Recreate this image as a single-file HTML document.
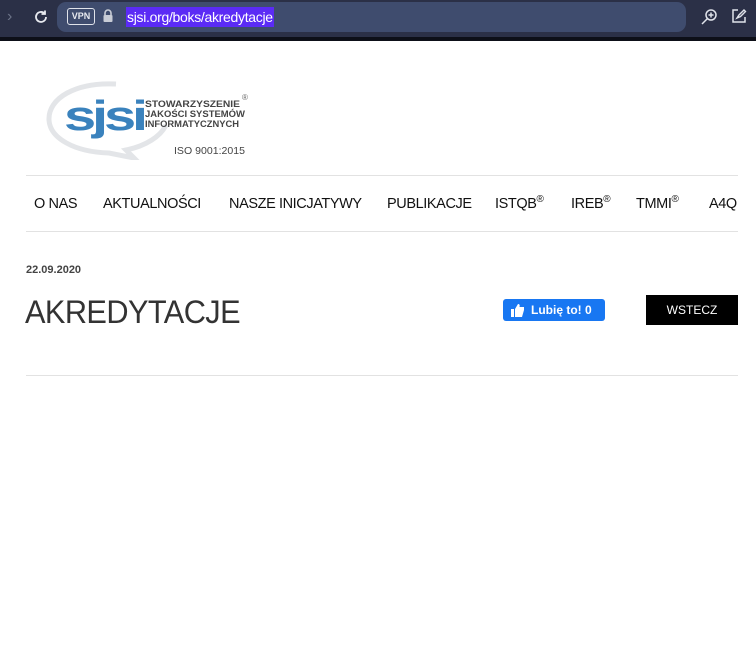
<!DOCTYPE html>
<html><head><meta charset="utf-8"><style>
*{margin:0;padding:0;box-sizing:border-box}
body{width:756px;height:671px;background:#fff;font-family:"Liberation Sans",sans-serif;position:relative;overflow:hidden}
.abs{position:absolute}
.top{left:0;top:0;width:756px;height:37px;background:#2b3047}
.blk{left:0;top:37px;width:756px;height:4px;background:#0d0f18}
.pill{left:57px;top:2px;width:629px;height:30px;background:#3f4c6e;border-radius:9px}
.vpn{left:67px;top:8px;width:28px;height:17px;border:1.5px solid #e0e3ea;border-radius:3px;color:#e8eaf0;font-size:9px;font-weight:bold;text-align:center;line-height:14px}
.url{left:126px;top:7px;height:20px;background:#5b2bf5;color:#fff;font-size:14px;line-height:20px;padding:0 1px;letter-spacing:-0.3px}
.nav{top:195px;font-size:14.5px;color:#111;line-height:18px;letter-spacing:-0.4px;white-space:nowrap}
.nav sup{font-size:10px;line-height:0;vertical-align:6px}
.hr{left:26px;width:712px;height:1px;background:#e2e2e2}
</style></head><body>
<div class="abs top"></div><div class="abs blk"></div>
<div class="abs" style="left:7px;top:8px;color:#6c7388;font-size:16px">›</div>
<svg class="abs" style="left:33px;top:9px" width="16" height="16" viewBox="0 0 16 16"><path d="M13 8a5 5 0 1 1-1.5-3.6" fill="none" stroke="#e8eaf0" stroke-width="1.8"/><path d="M12 1.5v3.5h-3.5" fill="none" stroke="#e8eaf0" stroke-width="1.8"/></svg>
<div class="abs pill"></div>
<div class="abs vpn">VPN</div>
<svg class="abs" style="left:102px;top:9px" width="12" height="14" viewBox="0 0 12 14"><path d="M3 6V4a3 3 0 0 1 6 0v2" fill="none" stroke="#c8ccd6" stroke-width="1.6"/><rect x="1.5" y="6" width="9" height="7" rx="1" fill="#c8ccd6"/></svg>
<div class="abs url">sjsi.org/boks/akredytacje</div>
<svg class="abs" style="left:700px;top:8px" width="18" height="18" viewBox="0 0 18 18"><circle cx="11" cy="7" r="5" fill="none" stroke="#e0e3ea" stroke-width="1.5"/><path d="M7.5 10.5L2 16M11 4.5v5M8.5 7h5" stroke="#e0e3ea" stroke-width="1.5"/></svg>
<svg class="abs" style="left:731px;top:8px" width="16" height="16" viewBox="0 0 16 16"><path d="M7 2H2v12h12V9" fill="none" stroke="#e0e3ea" stroke-width="1.5"/><path d="M6 10l2-3 5-5 1.5 1.5-5 5z" fill="none" stroke="#e0e3ea" stroke-width="1.4"/></svg>

<svg class="abs" style="left:46px;top:78px" width="210" height="82" viewBox="0 0 210 82">
<path d="M70 6C30 4 2 20 3 42c1 18 25 32 60 33l25 5-8-8c20-4 35-14 40-25" fill="none" stroke="#e3e5e8" stroke-width="5"/>
<text x="18" y="52" font-family="Liberation Sans" font-weight="bold" font-size="42" fill="#3a82bd" letter-spacing="-3" textLength="80" lengthAdjust="spacingAndGlyphs">sjsi</text>
<text x="99" y="29" font-family="Liberation Sans" font-weight="bold" font-size="9" fill="#444" textLength="95" lengthAdjust="spacingAndGlyphs">STOWARZYSZENIE</text>
<text x="99" y="39" font-family="Liberation Sans" font-weight="bold" font-size="9" fill="#444" textLength="100" lengthAdjust="spacingAndGlyphs">JAKOŚCI SYSTEMÓW</text>
<text x="99" y="49" font-family="Liberation Sans" font-weight="bold" font-size="9" fill="#444" textLength="94" lengthAdjust="spacingAndGlyphs">INFORMATYCZNYCH</text>
<text x="196" y="22" font-family="Liberation Sans" font-size="8" fill="#666">®</text>
<text x="128" y="76" font-family="Liberation Sans" font-size="10.5" fill="#444" textLength="71" lengthAdjust="spacingAndGlyphs">ISO 9001:2015</text>
</svg>

<div class="abs hr" style="top:175px"></div>
<div class="abs nav" style="left:34px">O NAS</div>
<div class="abs nav" style="left:103px">AKTUALNOŚCI</div>
<div class="abs nav" style="left:229px">NASZE INICJATYWY</div>
<div class="abs nav" style="left:387px">PUBLIKACJE</div>
<div class="abs nav" style="left:495px">ISTQB<sup>®</sup></div>
<div class="abs nav" style="left:571px">IREB<sup>®</sup></div>
<div class="abs nav" style="left:636px">TMMI<sup>®</sup></div>
<div class="abs nav" style="left:709px">A4Q</div>
<div class="abs hr" style="top:231px"></div>

<div class="abs" style="left:26px;top:264px;font-size:11px;color:#444;font-weight:bold">22.09.2020</div>
<div class="abs" style="left:25px;top:294px;font-size:32px;color:#333;letter-spacing:-0.6px;transform:scaleX(0.96);transform-origin:left">AKREDYTACJE</div>
<div class="abs" style="left:503px;top:299px;width:102px;height:22px;background:#1877f2;border-radius:3px;color:#fff;font-size:12px;font-weight:bold;line-height:22px;padding-left:28px">Lubię to! 0</div>
<svg class="abs" style="left:511px;top:303px" width="14" height="14" viewBox="0 0 14 14"><rect x="0" y="6" width="3" height="8" fill="#fff"/><path d="M4 6L7 1c1.5 0 2 1 1.5 3H13v3l-2 7H4z" fill="#fff"/></svg>
<div class="abs" style="left:646px;top:295px;width:92px;height:30px;background:#000;color:#fff;font-size:12px;line-height:30px;text-align:center">WSTECZ</div>
<div class="abs hr" style="top:375px"></div>
</body></html>
